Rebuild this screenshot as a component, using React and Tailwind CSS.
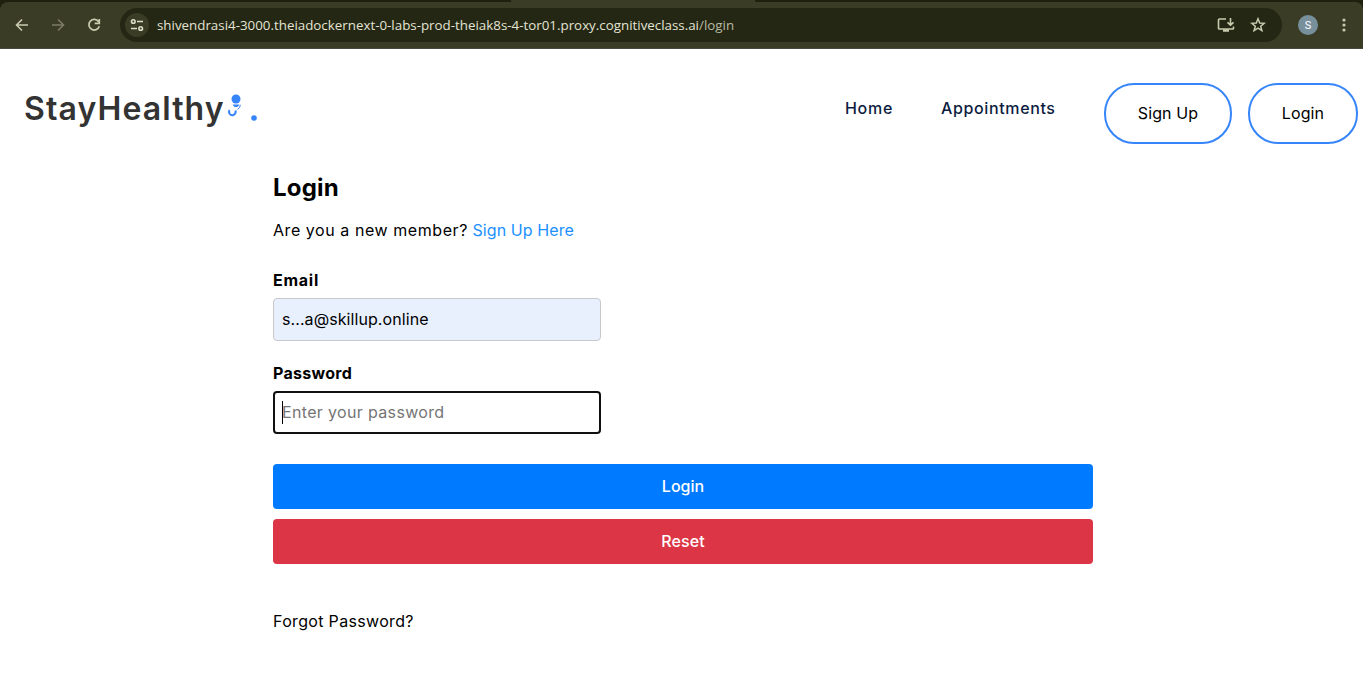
function BrowserBar() {
  return (
    <header className="flex h-[49px] flex-col bg-[#1f210f]">
      <div className="flex h-[2px] justify-between">
        <div className="ml-2 w-[502px] bg-[#1f210f]" />
        <div className="mr-[608px] w-[244px] bg-[#3b3c25]" />
      </div>
      <div className="flex h-[47px] items-center rounded-t-lg border-b border-[#47483a] bg-[#3b3c25]">
        <svg className="ml-[14px] h-4 w-4 shrink-0" viewBox="0 0 16 16" fill="none" stroke="#c8cbae" strokeWidth="1.6">
          <path d="M14 8H3M8 2.5 2.5 8 8 13.500" />
        </svg>
        <svg className="ml-5 h-4 w-4 shrink-0" viewBox="0 0 16 16" fill="none" stroke="#7b7c65" strokeWidth="1.6">
          <path d="M2 8H13M8 2.5 13.500 8 8 13.500" />
        </svg>
        <svg className="ml-5 h-4 w-4 shrink-0" viewBox="0 0 16 16" fill="none" stroke="#c8cbae" strokeWidth="1.700">
          <path d="M12.600 4.700A5.300 5.300 0 1 0 13.300 9.300M13.300 2V6.300H8.700" />
        </svg>
        <div className="ml-[18px] flex h-[34px] w-[1162px] shrink-0 items-center rounded-full bg-[#242713]">
          <div className="ml-[5px] flex h-6 w-6 items-center justify-center rounded-full bg-[#3b3c25]">
            <svg className="h-4 w-4" viewBox="0 0 16 16" fill="none" stroke="#dcdfc5" strokeWidth="1.600">
              <circle cx="4.300" cy="4.500" r="1.800" />
              <path d="M8 4.500H14M2 11.500H8" />
              <circle cx="11.700" cy="11.500" r="1.800" />
            </svg>
          </div>
          <div className="ml-2 whitespace-nowrap font-['Open_Sans','Noto_Sans',sans-serif] text-[13.35px] leading-5 text-[#e3e4d3]">
            shivendrasi4-3000.theiadockernext-0-labs-prod-theiak8s-4-tor01.proxy.cognitiveclass.ai<span className="text-[#b9baa4]">/login</span>
          </div>
          <svg className="ml-auto h-4 w-[18px]" viewBox="0 0 18 16" fill="none" stroke="#c8cbae" strokeWidth="1.600">
            <path d="M9 2H2.300Q1.500 2 1.500 2.800V11.200Q1.500 12 2.300 12H15.700Q16.500 12 16.500 11.200V9.500M13.500 1V8M10.500 5.300 13.500 8.200 16.500 5.300" />
            <path d="M6 13.500H12" strokeWidth="2.500" />
          </svg>
          <svg className="ml-[15px] mr-[16px] h-4 w-4" viewBox="0 0 16 16" fill="none" stroke="#c8cbae" strokeWidth="1.500">
            <path d="M8 1.800 9.700 6 14.200 6.300 10.700 9.200 11.900 13.600 8 11.200 4.100 13.600 5.300 9.200 1.800 6.300 6.300 6Z" />
          </svg>
        </div>
        <div className="ml-4 flex h-5 w-5 items-center justify-center rounded-full bg-[#78909c] pt-px font-[Roboto,sans-serif] text-[11px] leading-none text-white">S</div>
        <svg className="ml-[18px] h-4 w-4" viewBox="0 0 16 16" fill="#c8cbae">
          <circle cx="8" cy="3" r="1.600" />
          <circle cx="8" cy="8" r="1.600" />
          <circle cx="8" cy="13" r="1.600" />
        </svg>
      </div>
    </header>
  );
}

function Navigation() {
  return (
    <nav className="flex h-[108px] items-start pl-6 pr-[5px] pt-[34px]">
      <div className="flex h-[50px] items-center text-[32px] font-semibold text-[#333333]">
        <span className="w-[199px] pt-px tracking-[1.1px] whitespace-nowrap">StayHealthy</span>
        <svg className="ml-1 h-[26px] w-4 -translate-y-[3px]" viewBox="0 0 16 26" fill="#3685fb">
          <circle cx="9" cy="7" r="4.500" />
          <path d="M5.500 12.500H12.500L11 14.500Q9 15.500 7 14.500Z" />
          <path d="M2.500 18Q1.500 19.500 2.500 21.500Q4 24 6.500 23Q8.800 22 8.800 18.500" fill="none" stroke="#3685fb" strokeWidth="2" />
          <path d="M13.300 12.800Q13.500 15.500 10.500 17.500" fill="none" stroke="#3685fb" />
        </svg>
        <svg className="ml-2 mt-[19px] h-[6px] w-[6px]" viewBox="0 0 6 6" fill="#3685fb">
          <circle cx="3" cy="3" r="2.800" />
        </svg>
      </div>
      <div className="ml-auto flex h-[50px] items-center font-medium text-[#0c1c3f]">
        <a className="w-24 tracking-[0.7px]">Home</a>
        <a className="w-[163px] tracking-[0.63px]">Appointments</a>
      </div>
      <button className="h-[61px] w-32 rounded-[30px] border-2 border-[#3685fb] pb-[2px] tracking-[0.1px]">Sign Up</button>
      <button className="ml-4 h-[61px] w-[110px] rounded-[30px] border-2 border-[#3685fb] pb-[2px] tracking-[0.1px]">Login</button>
    </nav>
  );
}

export default function App() {
  return (
    <div className="h-[682px] overflow-hidden bg-white font-['Inter','Open_Sans',sans-serif] text-base text-black">
      <BrowserBar />
      <Navigation />
      <main className="ml-[273px] w-[820px]">
        <h1 className="pt-[13px] text-2xl leading-9 font-bold tracking-[0.2px]">Login</h1>
        <p className="mt-3 leading-6">
          <span className="tracking-[0.56px]">Are you a new member?</span> <a className="tracking-[0.1px] text-[#2190ff]">Sign Up Here</a>
        </p>
        <form>
          <label className="mt-[26px] block leading-6 font-bold tracking-[0.75px]">Email</label>
          <div className="mt-[6px] flex h-[43px] w-[328px] items-center rounded-[4px] border border-[#c8c9cd] bg-[#e8f0fe] px-2 pb-[2px]">
            <span className="tracking-[0.08px]">s...a@skillup.online</span>
          </div>
          <label className="mt-5 block leading-6 font-bold tracking-[0.3px]">Password</label>
          <div className="mt-[6px] flex h-[43px] w-[328px] items-center rounded-[4px] border-2 border-[#101010] px-[7px]">
            <span className="h-[23px] w-px bg-black" />
            <span className="-ml-px pb-[2px] tracking-[0.34px] text-[#757575]">Enter your password</span>
          </div>
          <button className="mt-[30px] flex h-[45px] w-full items-center justify-center rounded-[4px] bg-[#007bff] pb-[2px] font-medium text-white">Login</button>
          <button className="mt-[10px] flex h-[45px] w-full items-center justify-center rounded-[4px] bg-[#dc3545] pb-[2px] font-medium tracking-[0.1px] text-white">Reset</button>
        </form>
        <a className="mt-[45px] block leading-6 tracking-[0.33px]">Forgot Password?</a>
      </main>
    </div>
  );
}
